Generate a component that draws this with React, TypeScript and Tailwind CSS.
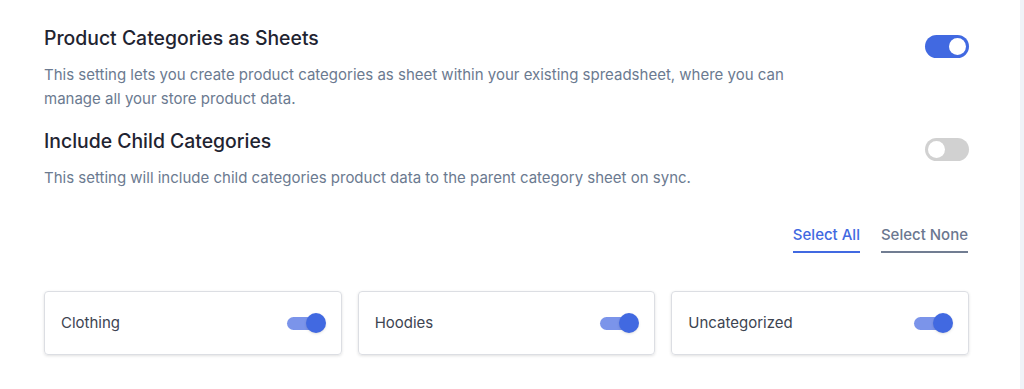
import { useState } from "react";

function Switch({ on, onClick }: { on: boolean; onClick: () => void }) {
  return (
    <button
      onClick={onClick}
      className={`relative w-[44px] h-[23px] rounded-full shrink-0 transition ${on ? "bg-[#4169e1]" : "bg-[#d1d1d1]"}`}
    >
      <span
        className={`absolute top-[3px] w-[17px] h-[17px] rounded-full bg-white transition-all ${on ? "left-[24px]" : "left-[3px]"}`}
      />
    </button>
  );
}

function MiniSwitch({ on, onClick }: { on: boolean; onClick: () => void }) {
  return (
    <button onClick={onClick} className="relative w-[39px] h-[20px] shrink-0">
      <span className={`absolute left-0 top-[4px] w-[34px] h-[13px] rounded-full ${on ? "bg-[#7b94ea]" : "bg-[#d1d5db]"}`} />
      <span
        className={`absolute top-0 w-[20px] h-[20px] rounded-full shadow-sm ${on ? "right-0 bg-[#4169e1]" : "left-0 bg-white"}`}
      />
    </button>
  );
}

export default function App() {
  const [asSheets, setAsSheets] = useState(true);
  const [childCats, setChildCats] = useState(false);
  const [cats, setCats] = useState<Record<string, boolean>>({
    Clothing: true,
    Hoodies: true,
    Uncategorized: true,
  });

  const setAll = (v: boolean) =>
    setCats(Object.fromEntries(Object.keys(cats).map((k) => [k, v])));

  return (
    <div className="flex w-[1024px] h-[389px] bg-white font-['Inter',sans-serif]">
      <div className="flex-1 pl-[44px] pr-[51px] pt-[24px]">
        {/* Setting: categories as sheets */}
        <div className="flex justify-between items-start">
          <div>
            <h2 className="text-[19.4px] leading-[28px] font-medium text-[#1f2431]">Product Categories as Sheets</h2>
            <p className="mt-[11px] max-w-[760px] text-[15px] leading-[24px] text-[#6b7a90]">
              This setting lets you create product categories as sheet within your existing spreadsheet, where you can
              manage all your store product data.
            </p>
          </div>
          <div className="mt-[11px]">
            <Switch on={asSheets} onClick={() => setAsSheets(!asSheets)} />
          </div>
        </div>

        {/* Setting: child categories */}
        <div className="flex justify-between items-start mt-[16px]">
          <div>
            <h2 className="text-[19.4px] leading-[28px] font-medium text-[#1f2431]">Include Child Categories</h2>
            <p className="mt-[11px] text-[15px] leading-[24px] text-[#6b7a90]">
              This setting will include child categories product data to the parent category sheet on sync.
            </p>
          </div>
          <div className="mt-[11px]">
            <Switch on={childCats} onClick={() => setChildCats(!childCats)} />
          </div>
        </div>

        {/* Select all / none */}
        <div className="flex justify-end gap-[21px] mt-[35px] pr-px">
          <button
            onClick={() => setAll(true)}
            className="text-[15px] leading-[20px] font-medium text-[#4169e1] pb-[6px] border-b-2 border-[#4169e1]"
          >
            Select All
          </button>
          <button
            onClick={() => setAll(false)}
            className="text-[15px] leading-[20px] font-medium text-[#6b7790] pb-[6px] border-b-2 border-[#717d92]"
          >
            Select None
          </button>
        </div>

        {/* Category cards */}
        <div className="grid grid-cols-3 gap-4 mt-[38px]">
          {Object.keys(cats).map((name) => (
            <div
              key={name}
              className="h-[64px] flex items-center justify-between pl-[16px] pr-[15px] border border-[#dcdee3] rounded-[4px] shadow-[0_1px_3px_rgba(0,0,0,0.12)]"
            >
              <span className="text-[15px] text-[#3d4451] mt-px">{name}</span>
              <MiniSwitch on={cats[name]} onClick={() => setCats({ ...cats, [name]: !cats[name] })} />
            </div>
          ))}
        </div>
      </div>
      <div className="w-[4px] bg-[#f0f3f8]" />
    </div>
  );
}
